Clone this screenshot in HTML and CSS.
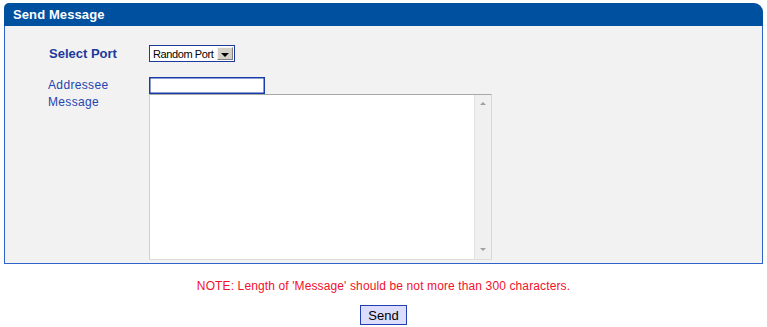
FILE: index.html
```html
<!DOCTYPE html>
<html lang="en">
<head>
    <meta charset="UTF-8">
    <title>Send Message</title>
    <link rel="stylesheet" href="styles.css">
</head>
<body>
    <div class="panel">
        <div class="panel-head">Send Message</div>
        <div class="panel-body">
            <div class="form-grid">
                <label class="lbl lbl-strong" for="port">Select Port</label>
                <div class="select-box">
                    <select id="port">
                        <option>Random Port</option>
                    </select>
                    <span class="drop-btn"><span class="drop-arrow"></span></span>
                </div>

                <label class="lbl" for="addressee">Addressee</label>
                <input type="text" id="addressee" class="text-in">

                <label class="lbl lbl-top" for="message">Message</label>
                <div class="msg-box">
                    <textarea id="message"></textarea>
                    <div class="fake-scroll">
                        <span class="arr arr-up"></span>
                        <span class="arr arr-down"></span>
                    </div>
                </div>
            </div>
        </div>
    </div>

    <p class="note">NOTE: Length of 'Message' should be not more than 300 characters.</p>

    <div class="actions">
        <button id="send" class="send-btn">Send</button>
    </div>
</body>
</html>
```

FILE: styles.css
```css
body {
    margin: 0;
    padding: 3px 4px 0;
    font-family: "Liberation Sans", Arial, sans-serif;
    background: #fff;
}
.panel {
    width: 759px;
}
.panel-head {
    height: 23px;
    line-height: 23px;
    padding-left: 9px;
    background: #0050a0;
    color: #fff;
    font-size: 13px;
    font-weight: bold;
    letter-spacing: 0.1px;
    border-radius: 5px 9px 0 0;
}
.panel-body {
    background: #f2f2f2;
    border: 1px solid #2e64c8;
    border-top: none;
    padding: 19px 0 3px 43px;
}
.form-grid {
    display: grid;
    grid-template-columns: 101px auto;
    align-items: start;
}
.lbl {
    font-size: 12px;
    line-height: 17px;
    letter-spacing: 0.35px;
    color: #2444b0;
}
.lbl-strong {
    font-size: 13px;
    font-weight: bold;
    letter-spacing: 0;
    color: #1c3a9c;
    padding-left: 1px;
    margin-bottom: 15px;
}
.lbl-top {
    line-height: 16px;
}
.select-box {
    display: flex;
    align-items: center;
    width: 86px;
    height: 17px;
    box-sizing: border-box;
    border: 1px solid #1c3a9c;
    background: #fff;
    margin-bottom: 15px;
}
.select-box select {
    appearance: none;
    -webkit-appearance: none;
    border: none;
    background: transparent;
    outline: none;
    flex: 1;
    min-width: 0;
    padding: 0 0 0 3px;
    font-family: "Liberation Sans", Arial, sans-serif;
    font-size: 11px;
    letter-spacing: -0.4px;
    color: #000;
}
.drop-btn {
    display: flex;
    align-items: center;
    justify-content: center;
    width: 16px;
    height: 13px;
    margin-right: 1px;
    box-sizing: border-box;
    background: #d4d0c8;
    border: 1px solid;
    border-color: #f4f4f4 #808080 #808080 #f4f4f4;
}
.drop-arrow {
    width: 0;
    height: 0;
    margin-top: 3px;
    border-left: 4px solid transparent;
    border-right: 4px solid transparent;
    border-top: 4px solid #000;
}
.text-in {
    width: 116px;
    height: 17px;
    box-sizing: border-box;
    margin: 0;
    padding: 0 2px;
    border: 1px solid #1a3ca8;
    box-shadow: inset 0 0 0 0.5px #1a3ca8;
    background: #fff;
    font-size: 12px;
    outline: none;
}
.msg-box {
    display: flex;
    width: 343px;
    height: 166px;
    box-sizing: border-box;
    border: 1px solid;
    border-color: #a8a8a8 #d8d8d8 #dcdcdc #d0d0d0;
    background: #fff;
}
.msg-box textarea {
    flex: 1;
    border: none;
    resize: none;
    outline: none;
    overflow: hidden;
    margin: 0;
    padding: 2px;
    font-family: "Liberation Sans", Arial, sans-serif;
    font-size: 12px;
}
.fake-scroll {
    width: 16px;
    display: flex;
    flex-direction: column;
    justify-content: space-between;
    align-items: center;
    padding: 7px 0 8px;
    background: #f0f0f0;
    border-left: 1px solid #e4e4e4;
}
.arr {
    width: 0;
    height: 0;
    border-left: 3px solid transparent;
    border-right: 3px solid transparent;
}
.arr-up {
    border-bottom: 3px solid #a0a0a0;
}
.arr-down {
    border-top: 3px solid #a0a0a0;
}
.note {
    margin: 13px 0 0;
    text-align: center;
    font-size: 12px;
    line-height: 18px;
    letter-spacing: 0.12px;
    color: #f2102c;
}
.actions {
    text-align: center;
    margin-top: 10px;
}
.send-btn {
    width: 47px;
    height: 20px;
    padding: 0;
    background: #dcdcfc;
    border: 1px solid #2040b0;
    font-family: "Liberation Sans", Arial, sans-serif;
    font-size: 13px;
    color: #000;
    cursor: pointer;
}
```
